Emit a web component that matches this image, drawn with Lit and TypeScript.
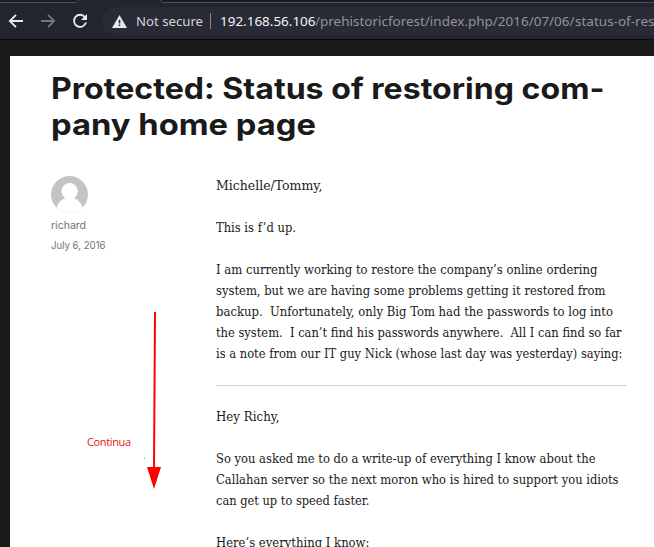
import { LitElement, html, css, svg } from "lit";
import { customElement, property } from "lit/decorators.js";

/** One line of text, stretched horizontally so that it fills a given measure. */
@customElement("fit-line")
class FitLine extends LitElement {
  @property({ type: Number }) measure = 0;
  static styles = css`
    :host { display: block; white-space: pre; }
    .run { display: inline-block; transform-origin: 0 50%; }
  `;
  render() {
    return html`<span class="run"><slot></slot></span>`;
  }
  firstUpdated() {
    const run = this.renderRoot.querySelector(".run") as HTMLElement;
    const natural = run.getBoundingClientRect().width;
    if (this.measure && natural) {
      this.style.width = `${this.measure}px`;
      run.style.transform = `scaleX(${this.measure / natural})`;
    }
  }
}

type Line = [string, number];

const letter: Line[][] = [
  [["Michelle/Tommy,", 106.5]],
  [["This is f’d up.", 80]],
  [
    ["I am currently working to restore the company’s online ordering", 381.5],
    ["system, but we are having some problems getting it restored from", 389.5],
    ["backup.  Unfortunately, only Big Tom had the passwords to log into", 397],
    ["the system.  I can’t find his passwords anywhere.  All I can find so far", 405.5],
    ["is a note from our IT guy Nick (whose last day was yesterday) saying:", 406.5],
  ],
];

const note: Line[][] = [
  [["Hey Richy,", 63.5]],
  [
    ["So you asked me to do a write-up of everything I know about the", 379.5],
    ["Callahan server so the next moron who is hired to support you idiots", 402.5],
    ["can get up to speed faster.", 153.5],
  ],
  [["Here’s everything I know:", 153.5]],
];

const lines = (ls: Line[]) => ls.map(([t, w]) => html`<fit-line .measure=${w}>${t}</fit-line>`);
const paragraphs = (ps: Line[][]) => ps.map((p) => html`<div class="para">${lines(p)}</div>`);

@customElement("app-root")
class AppRoot extends LitElement {
  static styles = css`
    :host {
      display: block; position: relative; width: 654px; height: 547px;
      overflow: hidden; background: #1a1a1a;
    }
    .tabs { display: block; height: 3px; width: 654px; background: #1b1c20; }
    .bar {
      display: flex; align-items: center; height: 36px; background: #22242e;
      border-bottom: 1px solid #0b0b0d;
    }
    .nav { display: block; flex: none; width: 102px; height: 36px; }
    .pill {
      display: flex; align-items: center; flex: none; width: 600px; height: 28px;
      border-radius: 14px; background: #282a35;
      font: 13.3px/28px "Noto Sans", sans-serif; color: #d4d5d7;
    }
    .warn { flex: none; margin: 0 9px 0 10px; }
    .sep { width: 1px; height: 16px; background: #85868c; margin: 0 9px 0 6.5px; }
    .secure, .host, .path { flex: none; }
    .host { color: #f4f4f5; }
    .path { color: #929398; }
    .page { margin: 16px 0 0 10px; background: #fff; height: 491px; padding: 14px 0 0 41px; box-sizing: border-box; }
    .title { margin: 0; font: 700 29.5px/36px Inter, sans-serif; color: #1a1a1a; }
    .entry { display: flex; margin-top: 33px; }
    .meta { width: 164.5px; flex: none; padding-top: 1px; font: 10.3px/20px Inter, sans-serif; color: #737373; }
    .avatar { display: block; margin-bottom: 2px; }
    .body {
      width: 411.5px; font: 12.7px/21px "DejaVu Serif Condensed", "DejaVu Serif", serif;
      font-stretch: condensed; color: #1a1a1a;
    }
    .para { margin-bottom: 21px; }
    .rule { height: 1px; background: #d1d1d1; margin-bottom: 20px; }
    .callout { position: absolute; left: 80px; top: 305px; }
    .callout text { font: 11px "Open Sans", "Noto Sans", sans-serif; fill: #f01414; }
  `;
  render() {
    return html`
      <svg class="tabs" viewBox="0 0 654 3">
        <path d="M78 3V2Q79 2 80 0H160Q161 2 163 3Z" fill="#22242e" />
        <path d="M0 2.5H75Q78 2.5 79 0M160 0Q161 2.5 164 2.5H654" fill="none" stroke="#515257" />
      </svg>
      <div class="bar">
        <svg class="nav" viewBox="0 3 102 36">
          <path d="M23 21H10M16 14.8L9.8 21L16 27.2" fill="none" stroke="#ececec" stroke-width="1.8" />
          <path d="M41 21H54M48 14.8L54.2 21L48 27.2" fill="none" stroke="#75767c" stroke-width="1.8" />
          <path d="M85.2 17.4A6.1 6.1 0 1 0 86 22.6" fill="none" stroke="#ececec" stroke-width="1.8" />
          <path d="M87 14V20H81Z" fill="#ececec" />
        </svg>
        <div class="pill">
          <svg class="warn" width="15" height="13" viewBox="0 0 15 13">
            <path d="M7.5 0L15 13H0Z" fill="#e8e8e8" />
            <path d="M6.7 4.8H8.3V8.4H6.7ZM6.7 9.6H8.3V11.1H6.7Z" fill="#282a35" />
          </svg>
          <fit-line class="secure" .measure=${67}>Not secure</fit-line>
          <span class="sep"></span>
          <fit-line class="host" .measure=${95.5}>192.168.56.106</fit-line>
          <fit-line class="path" .measure=${259.5}>/prehistoricforest/index.php/2016/07/06/</fit-line>
          <fit-line class="path" .measure=${79.5}>status-of-res</fit-line>
        </div>
      </div>
      <div class="page">
        <h1 class="title">
          <fit-line .measure=${553.5}>Protected: Status of restoring com-</fit-line>
          <fit-line .measure=${265}>pany home page</fit-line>
        </h1>
        <div class="entry">
          <div class="meta">
            <svg class="avatar" width="37" height="37" viewBox="0 0 37 37">
              <clipPath id="disc"><circle cx="18.5" cy="18.5" r="18.5" /></clipPath>
              <g clip-path="url(#disc)">
                <rect width="37" height="37" fill="#c4c4c4" />
                <circle cx="18.6" cy="15.3" r="8.2" fill="#fff" />
                <path d="M4.5 37C5 27.5 11 21.6 18.6 21.6S32.2 27.5 32.7 37Z" fill="#fff" />
              </g>
            </svg>
            <fit-line .measure=${35}>richard</fit-line>
            <fit-line .measure=${54.5}>July 6, 2016</fit-line>
          </div>
          <div class="body">
            ${paragraphs(letter)}
            <div class="rule"></div>
            ${paragraphs(note)}
          </div>
        </div>
      </div>
      <svg class="callout" width="90" height="190" viewBox="80 305 90 190">
        ${svg`<path d="M155 312L154 470" stroke="#f00" stroke-width="2" />
        <path d="M147 467H161L154 489Z" fill="#f00" />
        <rect x="144" y="457.5" width="1" height="1.5" fill="#5e5" />
        <text x="87" y="445.5" textLength="44">Continua</text>`}
      </svg>
    `;
  }
}
